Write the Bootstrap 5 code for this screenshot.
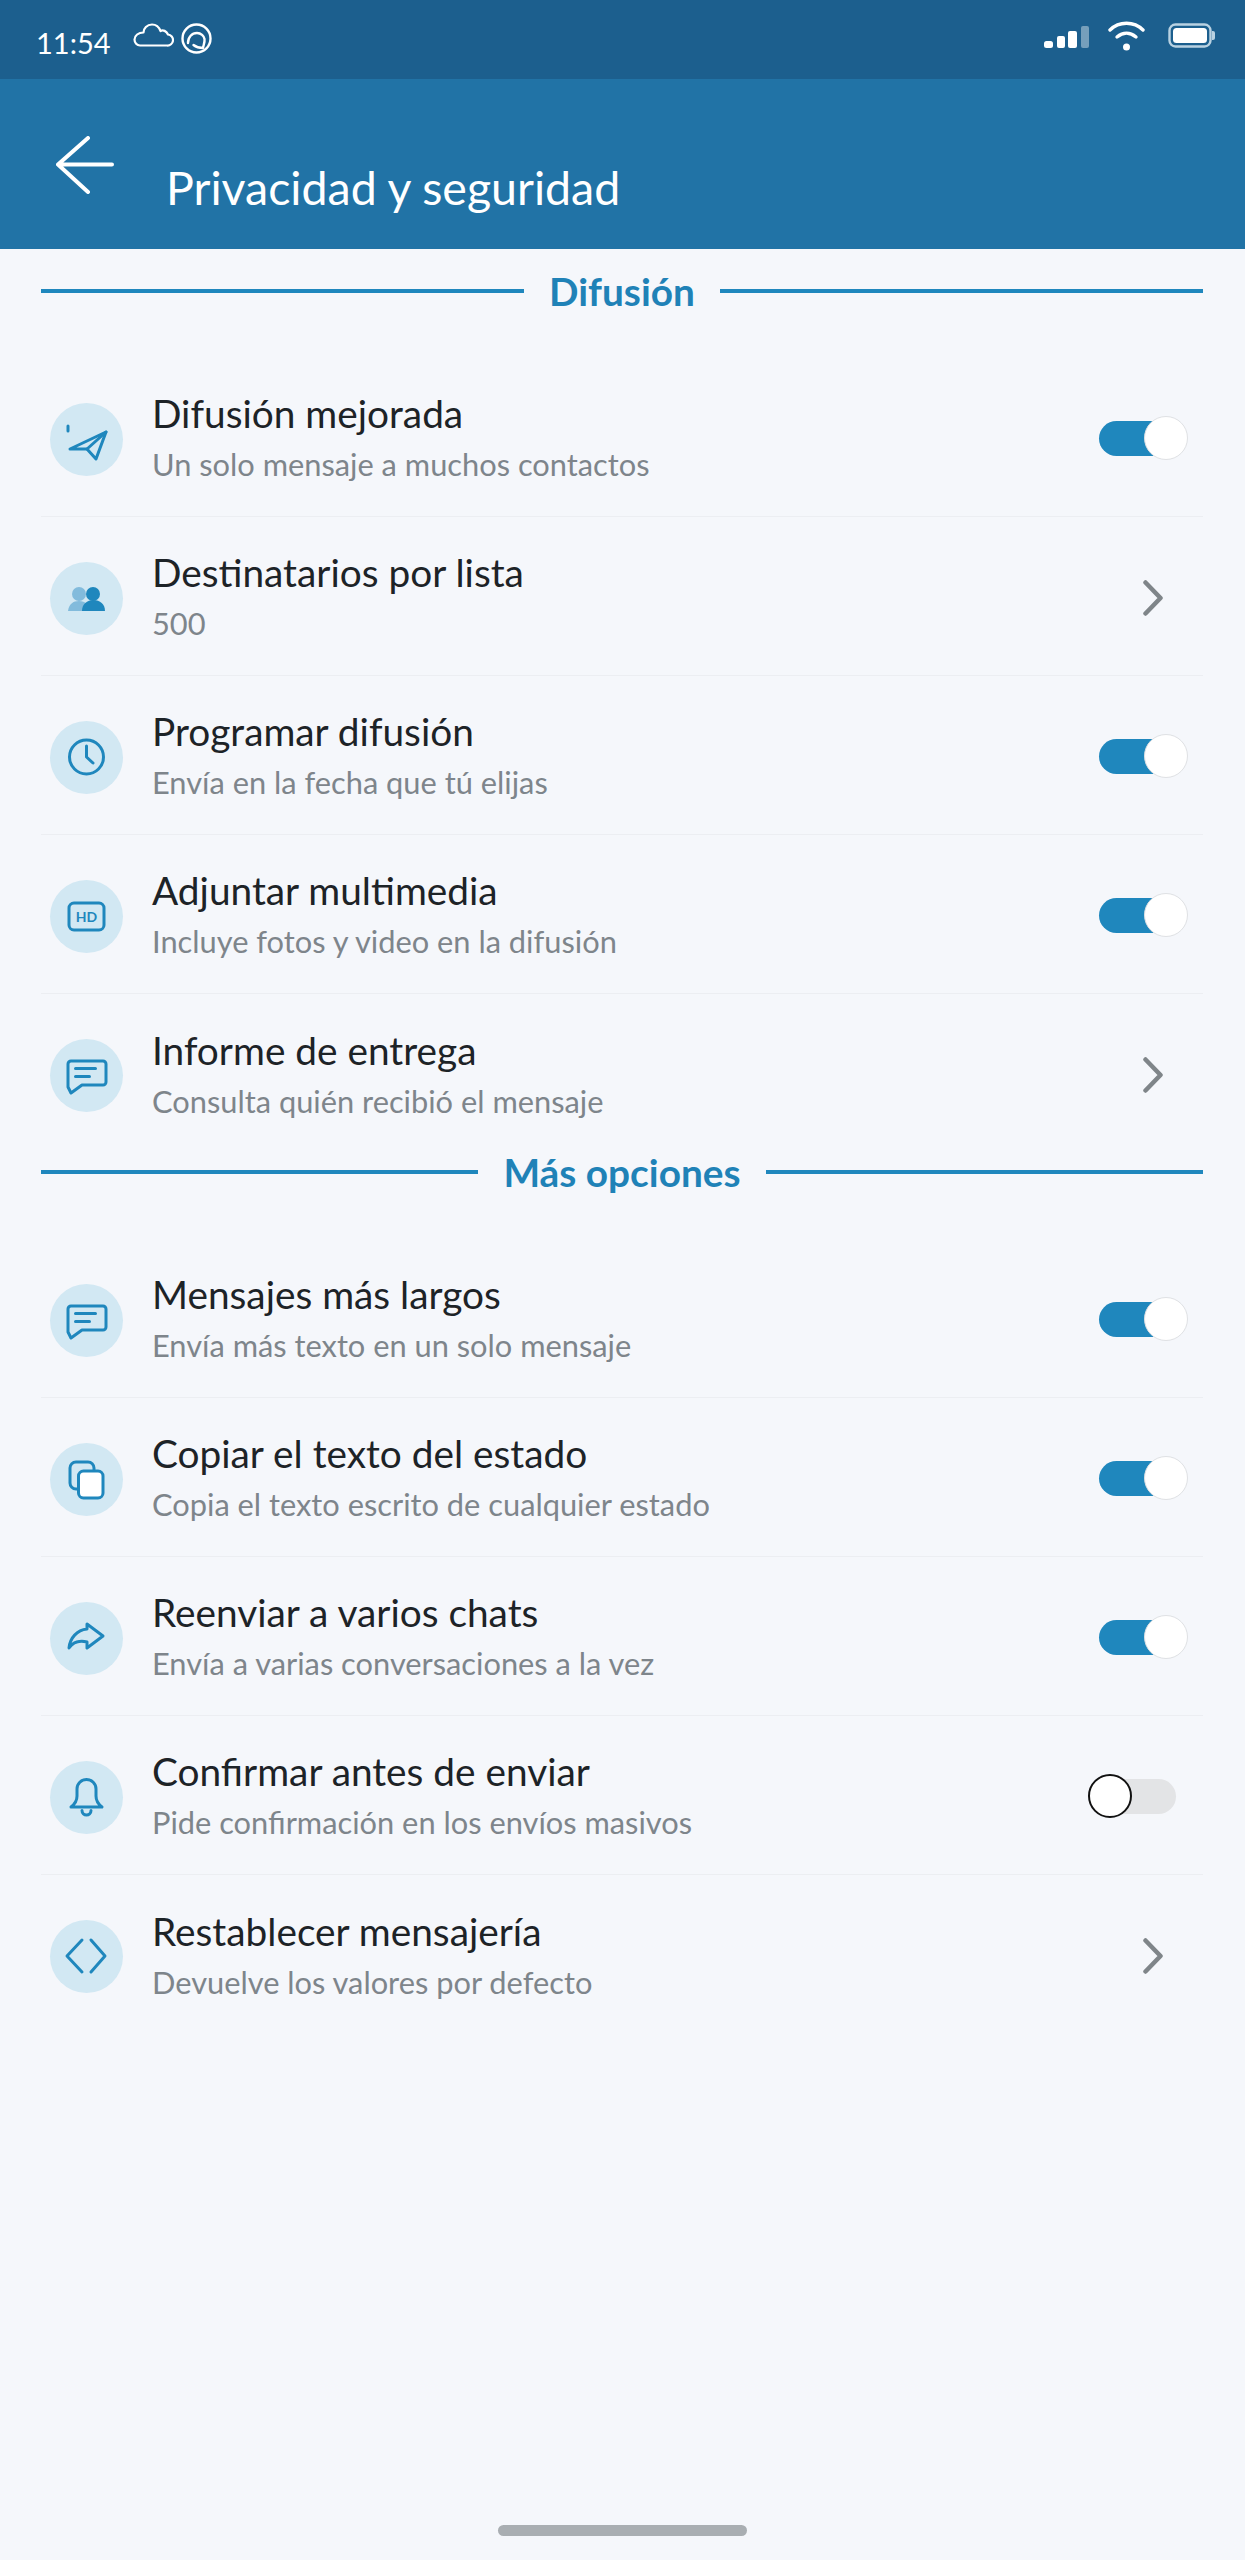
<!DOCTYPE html>
<html lang="es">
<head>
    <meta charset="UTF-8">
    <title>Privacidad y seguridad</title>
    <link rel="stylesheet" href="https://cdn.jsdelivr.net/npm/bootstrap@5.3.0/dist/css/bootstrap.min.css">
    <style>
        body { background: #f5f7fb; font-family: "Lato", "Liberation Sans", sans-serif; height: 2560px; overflow: hidden; }
        .phone-page { height: 2560px; }
        .status-strip { height: 79px; background: #1c5f8e; color: #fff; padding: 21px 30px 0 36px; }
        .status-time { font-size: 29px; line-height: 44px; }
        .status-left { gap: 22px; }
        .status-icons-left { gap: 7px; padding-top: 2px; }
        .status-right { gap: 19px; }
        .sig-bars { margin-top: 5px; }
        .batt-icon { margin: 2px 0 0 4px; }
        .app-bar { height: 170px; background: #2173a6; color: #fff; padding: 57px 0 0 56px; }
        .app-title { font-size: 46.5px; font-weight: 400; line-height: 54px; margin: 24px 0 0 52px; }
        .list-wrap { padding: 0 42px 0 41px; }
        .sec-head { color: #1f82b7; font-size: 38.8px; font-weight: 700; line-height: 46px; height: 90px; gap: 25px; margin-top: -4px; }
        .sec-head::before, .sec-head::after { content: ""; flex: 1; height: 4px; margin-top: 21px; background: #1f87bd; }
        .sec-first { margin-top: 19px; }
        .opt-list { --bs-list-group-bg: transparent; --bs-list-group-border-color: #eceef2; }
        .opt-row { height: 159px; padding: 0 0 0 9px; gap: 29px; }
        .opt-bubble { width: 73px; height: 73px; border-radius: 50%; background: #d2e8f3; flex-shrink: 0; margin-top: 4px; }
        .opt-bubble svg { display: block; fill: none; stroke: #1f87bd; stroke-width: 3; stroke-linecap: round; stroke-linejoin: round; }
        .opt-title { font-size: 38.8px; line-height: 46px; color: #1d2327; }
        .opt-sub { font-size: 30.8px; line-height: 38px; color: #7e858b; margin-top: 10px; }
        .slide { position: relative; width: 77px; height: 35px; border-radius: 18px; margin: 3px 27px 0 0; flex-shrink: 0; background: #1f87bd; }
        .slide::after { content: ""; position: absolute; top: -5px; right: -12px; width: 44px; height: 44px; border-radius: 50%; background: #fff; border: 1px solid #dfe1e4; }
        .slide-off { background: #e3e4e6; }
        .slide-off::after { right: auto; left: -11px; border: 2px solid #111; }
        .go-arrow { margin: 3px 40px 0 0; flex-shrink: 0; }
        .home-bar { position: absolute; left: 498px; top: 2525px; width: 249px; height: 11px; border-radius: 6px; background: #a9aeb2; }
    </style>
</head>
<body>
<div class="phone-page position-relative">
    <div class="status-strip d-flex justify-content-between">
        <div class="d-flex status-left">
            <span class="status-time">11:54</span>
            <div class="d-flex align-items-start status-icons-left">
                <svg width="41" height="24" viewBox="0 0 41 24" fill="none" stroke="#fff" stroke-width="2.2" stroke-linejoin="round"><path d="M7 22.500h27a5.500 5.500 0 0 0 1-11C33.500 8 30 6.500 27.500 8 26 4 22.500 1.500 19 1.500c-5 0-8.500 4-8.500 8C5.500 9.500 1.500 12.500 1.500 16.500c0 3.500 2.500 6 5.500 6z"/></svg>
                <svg width="31" height="31" viewBox="0 0 31 31" fill="none" stroke="#fff" stroke-width="2.4" stroke-linecap="round" stroke-linejoin="round"><circle cx="15.500" cy="15.500" r="14"/><path d="M7 20C7 14 11 10 16 10c4 0 7 3 7.500 6 .5 3-1 6-1.500 9-3 0-7-1-9.500-3"/></svg>
            </div>
        </div>
        <div class="d-flex align-items-start status-right">
            <svg class="sig-bars" width="45" height="22" viewBox="0 0 45 22" fill="#fff"><rect x="0" y="15" width="9" height="7" rx="2.500"/><rect x="13" y="10" width="8" height="12" rx="2"/><rect x="24" y="5" width="9" height="17" rx="2"/><rect x="37" y="0" width="8" height="22" rx="2" opacity=".4"/></svg>
            <svg width="37" height="30" viewBox="0 0 37 30" fill="none" stroke="#fff" stroke-width="3.400" stroke-linecap="round"><path d="M2 9c9-9 24-9 33 0"/><path d="M9 16c6-5 13-5 19 0"/><circle cx="18.500" cy="26" r="3.500" fill="#fff" stroke="none"/></svg>
            <svg class="batt-icon" width="47" height="25" viewBox="0 0 47 25"><rect x="1.500" y="1.500" width="41" height="22" rx="6" fill="none" stroke="#b9d2e2" stroke-width="2.400"/><rect x="5" y="5" width="34" height="15" rx="3.500" fill="#fff"/><path d="M44 8h1a2 2 0 0 1 2 2v5a2 2 0 0 1-2 2h-1z" fill="#b9d2e2"/></svg>
        </div>
    </div>
    <div class="app-bar d-flex">
        <svg width="58" height="58" viewBox="0 0 58 58" fill="none" stroke="#fff" stroke-width="4" stroke-linecap="round" stroke-linejoin="round"><path d="M56 28.500H2M32 2 2 28.500 32 56"/></svg>
        <h1 class="app-title">Privacidad y seguridad</h1>
    </div>

    <div class="list-wrap">
        <div class="sec-head sec-first d-flex align-items-start"><span>Difusión</span></div>
        <div class="list-group list-group-flush opt-list">
            <div class="list-group-item opt-row d-flex align-items-center">
                <div class="opt-bubble"><svg width="73" height="73" viewBox="0 0 73 73"><path d="M20 46 56 29 46 56 37 46z"/><path d="M37 46 56 29"/><path d="M18 23v5"/></svg></div>
                <div class="flex-grow-1"><div class="opt-title">Difusión mejorada</div><div class="opt-sub">Un solo mensaje a muchos contactos</div></div>
                <span class="slide"></span>
            </div>
            <div class="list-group-item opt-row d-flex align-items-center">
                <div class="opt-bubble"><svg width="73" height="73" viewBox="0 0 73 73"><g stroke="none" fill="#82bbdc"><circle cx="29" cy="32" r="7"/><path d="M18 49c1-7 5-10 11-10 3 0 6 1 8 3l-2 7z"/></g><g stroke="none" fill="#1f87bd"><circle cx="43" cy="32" r="7"/><path d="M32 49c0-7 5-11 11.500-11S55 42 55 49z"/></g></svg></div>
                <div class="flex-grow-1"><div class="opt-title">Destinatarios por lista</div><div class="opt-sub">500</div></div>
                <svg class="go-arrow" width="20" height="36" viewBox="0 0 20 36" fill="none" stroke="#7f8589" stroke-width="4.500" stroke-linecap="round" stroke-linejoin="round"><path d="M2.500 2.500 17.500 18 2.500 33.500"/></svg>
            </div>
            <div class="list-group-item opt-row d-flex align-items-center">
                <div class="opt-bubble"><svg width="73" height="73" viewBox="0 0 73 73"><circle cx="36.500" cy="36" r="17"/><path d="M36.500 25v11l6.500 6"/></svg></div>
                <div class="flex-grow-1"><div class="opt-title">Programar difusión</div><div class="opt-sub">Envía en la fecha que tú elijas</div></div>
                <span class="slide"></span>
            </div>
            <div class="list-group-item opt-row d-flex align-items-center">
                <div class="opt-bubble"><svg width="73" height="73" viewBox="0 0 73 73"><rect x="19" y="23" width="35" height="27" rx="5"/><text x="36.500" y="41.500" text-anchor="middle" font-family="Lato, sans-serif" font-size="14" font-weight="700" fill="#1f87bd" stroke="none">HD</text></svg></div>
                <div class="flex-grow-1"><div class="opt-title">Adjuntar multimedia</div><div class="opt-sub">Incluye fotos y video en la difusión</div></div>
                <span class="slide"></span>
            </div>
            <div class="list-group-item opt-row d-flex align-items-center">
                <div class="opt-bubble"><svg width="73" height="73" viewBox="0 0 73 73"><path d="M18 25a3 3 0 0 1 3-3h32a3 3 0 0 1 3 3v18a3 3 0 0 1-3 3H32L21 54l-3-6z"/><path d="M25.500 29.500h20M25.500 37.500h14"/></svg></div>
                <div class="flex-grow-1"><div class="opt-title">Informe de entrega</div><div class="opt-sub">Consulta quién recibió el mensaje</div></div>
                <svg class="go-arrow" width="20" height="36" viewBox="0 0 20 36" fill="none" stroke="#7f8589" stroke-width="4.500" stroke-linecap="round" stroke-linejoin="round"><path d="M2.500 2.500 17.500 18 2.500 33.500"/></svg>
            </div>
        </div>

        <div class="sec-head d-flex align-items-start"><span>Más opciones</span></div>
        <div class="list-group list-group-flush opt-list">
            <div class="list-group-item opt-row d-flex align-items-center">
                <div class="opt-bubble"><svg width="73" height="73" viewBox="0 0 73 73"><path d="M18 25a3 3 0 0 1 3-3h32a3 3 0 0 1 3 3v18a3 3 0 0 1-3 3H32L21 54l-3-6z"/><path d="M25.500 29.500h20M25.500 37.500h14"/></svg></div>
                <div class="flex-grow-1"><div class="opt-title">Mensajes más largos</div><div class="opt-sub">Envía más texto en un solo mensaje</div></div>
                <span class="slide"></span>
            </div>
            <div class="list-group-item opt-row d-flex align-items-center">
                <div class="opt-bubble"><svg width="73" height="73" viewBox="0 0 73 73"><rect x="20" y="19" width="24" height="27" rx="6"/><rect x="28.500" y="28" width="24.500" height="27" rx="5" fill="#fff"/></svg></div>
                <div class="flex-grow-1"><div class="opt-title">Copiar el texto del estado</div><div class="opt-sub">Copia el texto escrito de cualquier estado</div></div>
                <span class="slide"></span>
            </div>
            <div class="list-group-item opt-row d-flex align-items-center">
                <div class="opt-bubble"><svg width="73" height="73" viewBox="0 0 73 73"><path d="M37 22 53 34 37 46V40C30 38 23 40 19 46 20 36 27 28 37 27z"/></svg></div>
                <div class="flex-grow-1"><div class="opt-title">Reenviar a varios chats</div><div class="opt-sub">Envía a varias conversaciones a la vez</div></div>
                <span class="slide"></span>
            </div>
            <div class="list-group-item opt-row d-flex align-items-center">
                <div class="opt-bubble"><svg width="73" height="73" viewBox="0 0 73 73"><path d="M21 46c4-3 6-6 6-11v-7a9.500 9.500 0 0 1 19 0v7c0 5 2 8 6 11z"/><path d="M32 49.500c0 6 9 6 9 0"/></svg></div>
                <div class="flex-grow-1"><div class="opt-title">Confirmar antes de enviar</div><div class="opt-sub">Pide confirmación en los envíos masivos</div></div>
                <span class="slide slide-off"></span>
            </div>
            <div class="list-group-item opt-row d-flex align-items-center">
                <div class="opt-bubble"><svg width="73" height="73" viewBox="0 0 73 73"><path d="M32 20 17 36 32 52M41 20 55 36 41 52"/></svg></div>
                <div class="flex-grow-1"><div class="opt-title">Restablecer mensajería</div><div class="opt-sub">Devuelve los valores por defecto</div></div>
                <svg class="go-arrow" width="20" height="36" viewBox="0 0 20 36" fill="none" stroke="#7f8589" stroke-width="4.500" stroke-linecap="round" stroke-linejoin="round"><path d="M2.500 2.500 17.500 18 2.500 33.500"/></svg>
            </div>
        </div>
    </div>
    <div class="home-bar"></div>
</div>
<script src="https://cdn.jsdelivr.net/npm/bootstrap@5.3.0/dist/js/bootstrap.bundle.min.js"></script>
</body>
</html>
